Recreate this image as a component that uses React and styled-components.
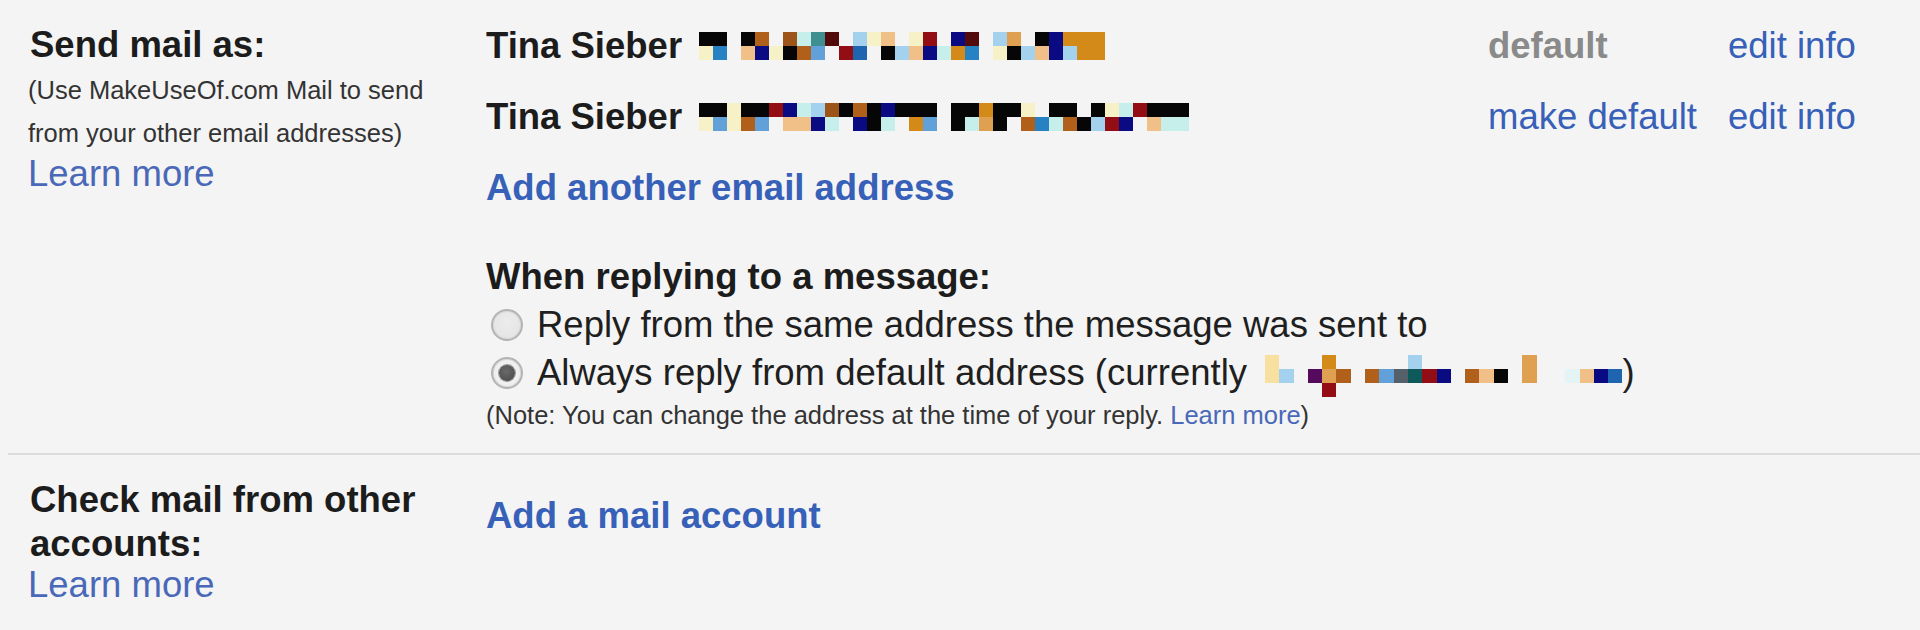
import React from "react";
import styled, { createGlobalStyle } from "styled-components";

const Global = createGlobalStyle`
  html, body { margin: 0; padding: 0; background: #f4f4f4; }
  body { font-family: "Liberation Sans", Arial, sans-serif; color: #1f1f1f; }
`;

const PALETTE = {
  K: "#060606",
  Y: "#f6f1c6",
  V: "#f8e0a0",
  B: "#2682c2",
  P: "#f0c088",
  Q: "#e0a052",
  O: "#b0601a",
  W: "#9c5418",
  N: "#0a0a82",
  C: "#c6eeea",
  F: "#e4f4f4",
  T: "#3f8f90",
  Z: "#0e5a5a",
  M: "#520a0a",
  R: "#930d14",
  L: "#a4d2ee",
  E: "#62a0da",
  S: "#1e64ae",
  A: "#d38a18",
  U: "#560a5e",
  G: "#55606a",
};

const MOSAIC_ONE = [
  "KK.KO.WCTM.LYP.YR.NM.LQ.KNAAA",
  "YB.PNYKOE.RS.KLPNCAB.YKLPNLAA",
];
const MOSAIC_TWO = [
  "KKYKKRNCLWKOKNKKK.KKAKKY.KK.KYCRKKK",
  "YEYOE.PPNC.NKC.AE.KCQK.OBCOKLRN.PCC",
];
const MOSAIC_THREE = [
  "V...A.....L.......Q......",
  "VL.UQO.OEGZRN.OPK.Q..FPNS",
  "....R....................",
];

const Page = styled.div`
  width: 1920px;
  min-height: 630px;
  background: #f4f4f4;
  font-size: 36.5px;
`;

const Section = styled.section`
  display: grid;
  grid-template-columns: 458px 1fr;
  padding: ${(p) => p.$pad};
`;

const LabelCol = styled.div`
  padding-top: ${(p) => p.$top || 0}px;
`;

const Label = styled.div`
  font-weight: bold;
  line-height: ${(p) => p.$lh || 48}px;
  color: #1c1c1c;
  padding-left: 2px;
`;

const Hint = styled.div`
  font-size: 25.5px;
  line-height: 43px;
  color: #333;
`;

const Link = styled.a`
  color: ${(p) => (p.$soft ? "#4a68b8" : "#3760b8")};
  font-weight: ${(p) => (p.$bold ? "bold" : "normal")};
  text-decoration: none;
  cursor: pointer;
`;

const LearnMore = styled.div`
  line-height: 38px;
`;

const ContentCol = styled.div`
  padding-top: ${(p) => p.$top || 0}px;
`;

const AddressGrid = styled.div`
  display: grid;
  grid-template-columns: 1002px 240px auto;
  grid-auto-rows: 71px;
  align-items: center;
`;

const Identity = styled.div`
  display: flex;
  align-items: center;
`;

const Name = styled.span`
  font-weight: bold;
  color: #1c1c1c;
  line-height: 48px;
`;

const Mosaic = styled.span`
  display: grid;
  flex: 0 0 auto;
  grid-template-columns: repeat(${(p) => p.$cols}, ${(p) => p.$size}px);
  grid-auto-rows: 14px;
  margin-left: ${(p) => p.$gap}px;
  margin-top: ${(p) => p.$shift || 0}px;
`;

const Cell = styled.span`
  background: ${(p) => p.$c};
`;

const Status = styled.span`
  font-weight: bold;
  color: #8a8a8a;
`;

const LinkLine = styled.div`
  line-height: ${(p) => p.$lh}px;
`;

const ReplyBlock = styled.div`
  margin-top: 30px;
`;

const Heading = styled.div`
  font-weight: bold;
  line-height: 48px;
  color: #1c1c1c;
`;

const RadioRow = styled.label`
  display: flex;
  align-items: center;
  height: 48px;
  color: #1f1f1f;
  white-space: nowrap;
`;

const Radio = styled.span`
  position: relative;
  flex: 0 0 auto;
  width: 32px;
  height: 32px;
  margin: -1px 14px 0 5px;
  border-radius: 50%;
  border: 2px solid #b4b4b4;
  box-shadow: inset 0 0 0 1px #d6d6d6;
  background: ${(p) =>
    p.$checked
      ? "radial-gradient(circle, #f2f2f2 0%, #eeeeee 100%)"
      : "radial-gradient(circle at 50% 40%, #ececec 0%, #e2e2e2 100%)"};
  box-sizing: border-box;
  &::after {
    content: "";
    display: ${(p) => (p.$checked ? "block" : "none")};
    position: absolute;
    left: 50%;
    top: 50%;
    width: 16px;
    height: 16px;
    margin: -8px 0 0 -8px;
    border-radius: 50%;
    background: radial-gradient(circle at 45% 40%, #6a6a6a 0%, #4e4e4e 80%);
    box-shadow: 0 0 0 1px #9a9a9a;
  }
`;

const Note = styled.div`
  font-size: 25.5px;
  line-height: 36px;
  color: #333;
`;

const Divider = styled.hr`
  margin: 0 0 0 8px;
  border: 0;
  border-top: 2px solid #dcdcdc;
  height: 0;
`;

function MosaicBlock({ rows, gap = 17, shift = 0, size = 14 }) {
  const cols = rows[0].length;
  const cells = [];
  rows.forEach((row, r) =>
    row.split("").forEach((ch, c) =>
      cells.push(<Cell key={`${r}-${c}`} $c={ch === "." ? "transparent" : PALETTE[ch]} />)
    )
  );
  return (
    <Mosaic $cols={cols} $gap={gap} $shift={shift} $size={size}>
      {cells}
    </Mosaic>
  );
}

export default function App() {
  return (
    <Page>
      <Global />
      <Section $pad="10px 0 20px 28px">
        <LabelCol $top={11}>
          <Label>Send mail as:</Label>
          <Hint>
            (Use MakeUseOf.com Mail to send
            <br />
            from your other email addresses)
          </Hint>
          <LearnMore>
            <Link $soft>Learn more</Link>
          </LearnMore>
        </LabelCol>
        <ContentCol>
          <AddressGrid>
            <Identity>
              <Name>Tina Sieber</Name>
              <MosaicBlock rows={MOSAIC_ONE} />
            </Identity>
            <Status>default</Status>
            <Link>edit info</Link>
            <Identity>
              <Name>Tina Sieber</Name>
              <MosaicBlock rows={MOSAIC_TWO} />
            </Identity>
            <Link>make default</Link>
            <Link>edit info</Link>
          </AddressGrid>
          <LinkLine $lh={71}>
            <Link $bold>Add another email address</Link>
          </LinkLine>
          <ReplyBlock>
            <Heading>When replying to a message:</Heading>
            <RadioRow>
              <Radio />
              <span>Reply from the same address the message was sent to</span>
            </RadioRow>
            <RadioRow>
              <Radio $checked />
              <span>Always reply from default address (currently</span>
              <MosaicBlock rows={MOSAIC_THREE} gap={18} shift={6} size={14.3} />
              <span>)</span>
            </RadioRow>
            <Note>
              (Note: You can change the address at the time of your reply. <Link $soft>Learn more</Link>)
            </Note>
          </ReplyBlock>
        </ContentCol>
      </Section>
      <Divider />
      <Section $pad="23px 0 20px 28px">
        <LabelCol>
          <Label $lh={44}>
            Check mail from other
            <br />
            accounts:
          </Label>
          <LearnMore>
            <Link $soft>Learn more</Link>
          </LearnMore>
        </LabelCol>
        <ContentCol $top={16}>
          <LinkLine $lh={44}>
            <Link $bold>Add a mail account</Link>
          </LinkLine>
        </ContentCol>
      </Section>
    </Page>
  );
}
